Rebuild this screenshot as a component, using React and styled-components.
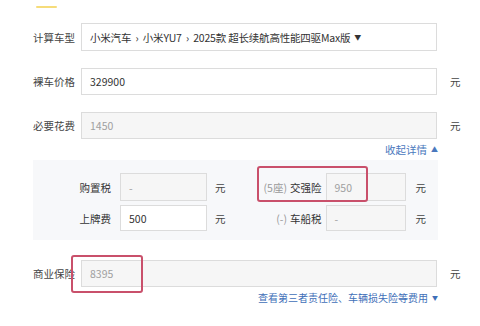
import React from 'react';
import styled, { createGlobalStyle } from 'styled-components';

const GlobalStyle = createGlobalStyle`
    body {
        margin: 0;
        background: #ffffff;
        font-family: "Noto Sans CJK SC", "Noto Sans", sans-serif;
        font-size: 10.5px;
        color: #333333;
    }
`

const Page = styled.div`
    width: 480px;
    height: 326px;
    padding-left: 33px;
    box-sizing: border-box;
    overflow: hidden;
`

const TabBar = styled.div`
    height: 23px;
    position: relative;

    span {
        position: absolute;
        left: 3px;
        top: 6px;
        width: 21px;
        height: 2px;
        background: #f6dc7a;
        border-radius: 1px;
    }
`

const Form = styled.div`
    display: flex;
    flex-direction: column;
    width: 430px;
`

const Row = styled.div`
    display: flex;
    align-items: center;
    position: relative;
    margin-top: ${({ $top }) => $top ?? 0}px;
    margin-bottom: ${({ $gap }) => $gap ?? 17}px;
`

const Label = styled.div`
    width: 48px;
    flex: none;
    color: #444;
    white-space: nowrap;
`

const Box = styled.div`
    width: ${({ $w }) => $w || 356}px;
    height: ${({ $h }) => $h || 28}px;
    flex: none;
    box-sizing: border-box;
    border: 1px solid #dcdcdc;
    background: ${({ $disabled }) => ($disabled ? '#f6f6f6' : '#ffffff')};
    color: ${({ $disabled }) => ($disabled ? '#a0a0a0' : '#333333')};
    display: flex;
    align-items: center;
    padding-left: 8px;
    white-space: nowrap;
    font-size: 10.5px;
    letter-spacing: ${({ $tight }) => ($tight ? '-0.2px' : '0')};
`

const Arrow = styled.span`
    font-size: ${({ $size }) => $size || 7}px;
    margin-left: 4px;
    color: ${({ $color }) => $color || '#333'};
`

const Unit = styled.div`
    margin-left: ${({ $ml }) => $ml ?? 13}px;
    color: #444;
`

const Toggle = styled.div`
    width: 405px;
    height: 21px;
    display: flex;
    justify-content: flex-end;
    align-items: center;
    color: #4a78bd;
    padding-bottom: 1px;
    box-sizing: border-box;
`

const Link = styled.div`
    width: 405px;
    display: flex;
    justify-content: flex-end;
    align-items: center;
    color: #3f6fb8;
    font-size: 10px;
    margin-top: 3px;
`

const Panel = styled.div`
    width: 405px;
    background: #f7f8fa;
    padding: 13px 0 9px;
    display: flex;
    flex-direction: column;
    gap: 4px;
    position: relative;
`

const InnerRow = styled.div`
    display: flex;
    align-items: center;
`

const FieldLabel = styled.div`
    width: ${({ $w }) => $w}px;
    flex: none;
    text-align: right;
    margin-right: ${({ $mr }) => $mr}px;
    color: #333;
    white-space: nowrap;

    em {
        font-style: normal;
        color: #9a9a9a;
        margin-right: 3px;
    }
`

const Mark = styled.div`
    position: absolute;
    left: ${({ $x }) => $x}px;
    top: ${({ $y }) => $y}px;
    width: ${({ $w }) => $w}px;
    height: ${({ $h }) => $h}px;
    border: 2.5px solid #c9506b;
    border-radius: 3px;
    box-sizing: border-box;
    pointer-events: none;
`

const details = [
    [
        { label: '购置税', value: '-', disabled: true },
        { note: '(5座)', label: '交强险', value: '950', disabled: true },
    ],
    [
        { label: '上牌费', value: '500', h: 26 },
        { note: '(-)', label: '车船税', value: '-', disabled: true, h: 26 },
    ],
]

const App = () => {
    return (
        <Page>
            <GlobalStyle />
            <TabBar><span /></TabBar>
            <Form>
                <Row>
                    <Label>计算车型</Label>
                    <Box $tight>
                        小米汽车&nbsp;&nbsp;›&nbsp;&nbsp;小米YU7&nbsp;&nbsp;›&nbsp;&nbsp;2025款 超长续航高性能四驱Max版
                        <Arrow>▼</Arrow>
                    </Box>
                </Row>
                <Row>
                    <Label>裸车价格</Label>
                    <Box $h={27}>329900</Box>
                    <Unit>元</Unit>
                </Row>
                <Row $gap={0}>
                    <Label>必要花费</Label>
                    <Box $h={27} $disabled>1450</Box>
                    <Unit>元</Unit>
                </Row>
                <Toggle>
                    收起详情<Arrow $color="#4a78bd">▲</Arrow>
                </Toggle>
                <Panel>
                    {details.map((row, i) => (
                        <InnerRow key={i}>
                            <FieldLabel $w={78} $mr={9}>{row[0].label}</FieldLabel>
                            <Box $w={87} $h={row[0].h} $disabled={row[0].disabled}>{row[0].value}</Box>
                            <Unit $ml={8}>元</Unit>
                            <FieldLabel $w={96} $mr={4}>
                                <em>{row[1].note}</em>{row[1].label}
                            </FieldLabel>
                            <Box $w={80} $h={row[1].h} $disabled={row[1].disabled}>{row[1].value}</Box>
                            <Unit $ml={10}>元</Unit>
                        </InnerRow>
                    ))}
                    <Mark $x={224} $y={6} $w={111} $h={36} />
                </Panel>
                <Row $gap={0} $top={20}>
                    <Label>商业保险</Label>
                    <Box $h={27} $disabled>8395</Box>
                    <Unit>元</Unit>
                    <Mark $x={38} $y={-5} $w={72} $h={38} />
                </Row>
                <Link>
                    查看第三者责任险、车辆损失险等费用<Arrow $color="#3f6fb8" $size={6}>▼</Arrow>
                </Link>
            </Form>
        </Page>
    )
}

export default App;
